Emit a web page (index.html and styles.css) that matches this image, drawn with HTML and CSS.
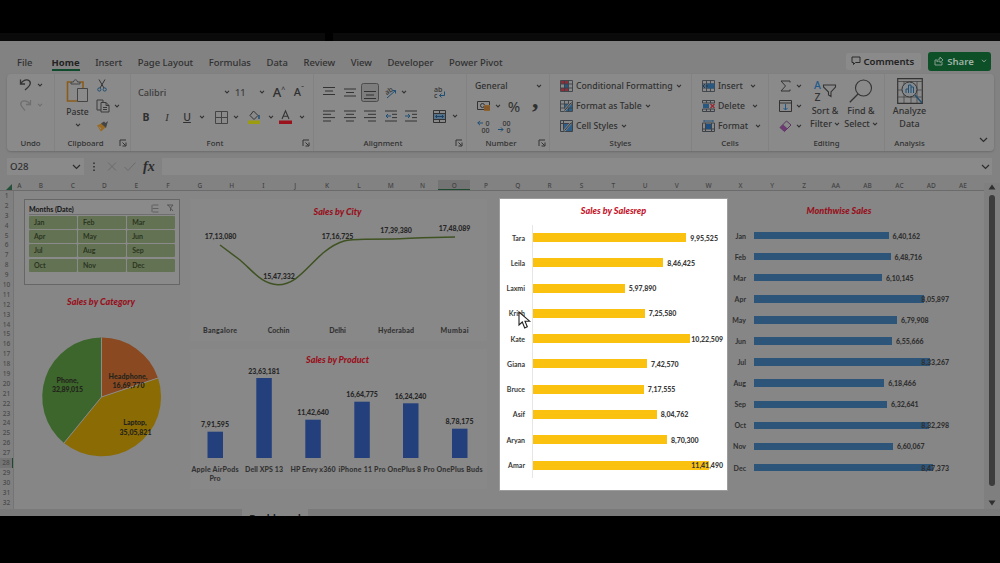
FILE: index.html
```html
<html lang="en">
<head>
    <meta charset="UTF-8">
    <meta name="viewport" content="width=device-width, initial-scale=1.0">
    <title>Sales Dashboard</title>
    <link rel="stylesheet" href="styles.css">
</head>
<body>
    <svg width="0" height="0" class="defs">
        <symbol id="chev" viewBox="0 0 6 4"><path d="M1 .8 3 2.9 5 .8" fill="none" stroke="#333" stroke-width="1.1"/></symbol>
        <symbol id="launch" viewBox="0 0 8 8"><path d="M1 7V1h6M3.5 3.5 6.5 6.5M7 3.5V7H3.5" fill="none" stroke="#333"/></symbol>
        <symbol id="grid" viewBox="0 0 13 12"><path d="M.5.5h12v11H.5zM.5 4h12M.5 8h12M4.5.5v11M8.5.5v11" fill="none" stroke="#3c4248" stroke-width=".9"/></symbol>
    </svg>
    <div class="letterbox"><span></span><span></span></div>
    <div class="app">
        <div class="tabs">
            <span class="tab file">File</span>
            <span class="tab active">Home</span>
            <span class="tab">Insert</span>
            <span class="tab">Page Layout</span>
            <span class="tab">Formulas</span>
            <span class="tab">Data</span>
            <span class="tab">Review</span>
            <span class="tab">View</span>
            <span class="tab">Developer</span>
            <span class="tab">Power Pivot</span>
            <div class="comments">
                <svg width="10" height="10" viewBox="0 0 10 10"><path d="M1 1h8v5.500H4.500L2.500 8.500v-2H1z" fill="none" stroke="#2a2a2a"/></svg>
                Comments
            </div>
            <div class="share">
                <svg width="10" height="10" viewBox="0 0 10 10"><path d="M3 4H1v5h7V6M3 6c0-2 1-3 3-3V1l3 3-3 2.500V5C5 5 4 5 3 6z" fill="none" stroke="#8fa598" stroke-width=".9"/></svg>
                <b>Share</b>
                <svg width="6" height="4" viewBox="0 0 6 4"><path d="M1 .8 3 2.900 5 .8" fill="none" stroke="#8fa598"/></svg>
            </div>
        </div>

        <div class="ribbon">
            <div class="group undo">
                <div class="tools">
                    <div class="row">
                        <svg width="13" height="14" viewBox="0 0 13 14"><path d="M1.500 1.500v4.500H6M1.500 6C4 2 8 .8 10.500 3c2.500 3-1 6-4.500 9" fill="none" stroke="#333" stroke-width="1.300"/></svg>
                        <svg class="chev"><use href="#chev"/></svg>
                    </div>
                    <div class="row faded">
                        <svg width="13" height="13" viewBox="0 0 13 13"><path d="M11.500 1v4.500H7M11.500 5.500C9 2 5 1 2.500 3 0 6 3.500 8 6 11.500" fill="none" stroke="#333" stroke-width="1.300"/></svg>
                        <svg class="chev"><use href="#chev"/></svg>
                    </div>
                </div>
                <div class="group-name"><span>Undo</span></div>
            </div>
            <div class="group clipboard">
                <div class="tools">
                    <div class="big">
                        <svg width="23" height="24" viewBox="0 0 23 24"><path d="M5 3H1.500v19H11M14 3h3v6" fill="none" stroke="#8a5c18" stroke-width="1.600"/><path d="M5 5V3h2.500c.5-3 3.500-3 4 0H14v2zM11.500 9.500h10v13h-10z" fill="#8b8b8b" stroke="#444"/></svg>
                        <span>Paste</span>
                        <svg class="chev"><use href="#chev"/></svg>
                    </div>
                    <div class="clips">
                        <svg width="10" height="13" viewBox="0 0 10 13"><path d="M2 .5 7 9M8 .5 3 9" fill="none" stroke="#333"/><circle cx="2.300" cy="10.500" r="1.600" fill="none" stroke="#1f4e74"/><circle cx="7.700" cy="10.500" r="1.600" fill="none" stroke="#1f4e74"/></svg>
                        <div class="copy">
                            <svg width="14" height="14" viewBox="0 0 14 14"><path d="M5 11H1V1h6v2M5 3.500h5l3 3V13H5zM10 3.500v3h3M7 8.500h4M7 10.500h4" fill="none" stroke="#3a3a3a"/></svg>
                            <svg class="chev"><use href="#chev"/></svg>
                        </div>
                        <svg width="13" height="12" viewBox="0 0 13 12"><path d="M1 5.500 5 11.500 9.500 7.500 5.500 3.500z" fill="#9a6a20"/><path d="M5 3.500 10 8 12 1 9.500 3 8 1.500z" fill="#444"/><path d="M3 6.500 5 9" stroke="#8b8b8b"/></svg>
                    </div>
                </div>
                <div class="group-name"><span>Clipboard</span><svg class="launch"><use href="#launch"/></svg></div>
            </div>
            <div class="group font">
                <div class="tools">
                    <div class="font-top">
                        <span class="field">Calibri</span><svg class="chev"><use href="#chev"/></svg>
                        <span class="field size">11</span><svg class="chev"><use href="#chev"/></svg>
                        <span class="grow">A<sup>^</sup></span>
                        <span class="grow shrink">A<sup>ˇ</sup></span>
                    </div>
                    <div class="font-bottom">
                        <b>B</b><i>I</i><u>U</u><svg class="chev"><use href="#chev"/></svg>
                        <svg width="13" height="13" viewBox="0 0 13 13"><path d="M.5.500h12v12H.5zM6.500.5v12M.5 6.500h12" fill="none" stroke="#444"/></svg><svg class="chev"><use href="#chev"/></svg>
                        <svg width="13" height="14" viewBox="0 0 13 14"><path d="M5.500 1 10 5.500 6 9.500 2 5.500z" fill="none" stroke="#333"/><path d="M11 5v4" stroke="#1f4e74" stroke-width="1.500"/><path d="M0 10.500h12v3.500H0z" fill="#9c9c10"/></svg><svg class="chev"><use href="#chev"/></svg>
                        <svg width="13" height="14" viewBox="0 0 13 14"><path d="M3 9 6.500.8 10 9M4.200 6.300h4.600" fill="none" stroke="#333" stroke-width="1.100"/><path d="M0 10.500h13v3.500H0z" fill="#99121c"/></svg><svg class="chev"><use href="#chev"/></svg>
                    </div>
                </div>
                <div class="group-name"><span>Font</span><svg class="launch"><use href="#launch"/></svg></div>
            </div>
            <div class="group align">
                <div class="tools">
                    <svg width="12" height="12" viewBox="0 0 12 12"><path d="M0 1.500h12M2 5h8M0 8.500h12" stroke="#333"/></svg>
                    <svg width="12" height="12" viewBox="0 0 12 12"><path d="M0 3h12M2 6.500h8M0 10h12" stroke="#333"/></svg>
                    <svg width="18" height="19" viewBox="0 0 18 19"><rect x=".5" y=".5" width="17" height="18" rx="2" fill="#7d7d7d" stroke="#4c4c4c"/><path d="M3 8.500h12M5 12h8M3 15.500h12" stroke="#333"/></svg>
                    <svg width="15" height="14" viewBox="0 0 15 14"><text x="2" y="9" font-size="7" fill="#333" transform="rotate(-35 5 7)">ab</text><path d="M4 13 12.500 5.500M9.500 5.500h3v3" fill="none" stroke="#1f4e74"/></svg>
                    <svg class="chev left"><use href="#chev"/></svg>
                    <i></i>
                    <svg width="13" height="15" viewBox="0 0 13 15"><text x="1" y="6.500" font-size="7" fill="#333">ab</text><text x="1" y="13" font-size="7" fill="#333">c</text><path d="M11.500 6.500v4H6.500M8.500 8.500l-2 2 2 2" fill="none" stroke="#1f4e74"/></svg>
                    <i></i>
                    <svg width="12" height="12" viewBox="0 0 12 12"><path d="M0 1h12M0 4.300h8M0 7.600h12M0 11h8" stroke="#333"/></svg>
                    <svg width="12" height="12" viewBox="0 0 12 12"><path d="M0 1h12M2 4.300h8M0 7.600h12M2 11h8" stroke="#333"/></svg>
                    <svg width="12" height="12" viewBox="0 0 12 12"><path d="M0 1h12M4 4.300h8M0 7.600h12M4 11h8" stroke="#333"/></svg>
                    <svg width="12" height="12" viewBox="0 0 12 12"><path d="M0 1h12M7 4.300h5M7 7.600h5M0 11h12" stroke="#333"/><path d="M6 6H1M3 4 1 6l2 2" fill="none" stroke="#1f4e74"/></svg>
                    <svg width="12" height="12" viewBox="0 0 12 12"><path d="M0 1h12M7 4.300h5M7 7.600h5M0 11h12" stroke="#333"/><path d="M0 6h5M3 4l2 2-2 2" fill="none" stroke="#1f4e74"/></svg>
                    <i></i>
                    <svg width="13" height="13" viewBox="0 0 13 13"><path d="M.5.500h12v12H.5zM.5 3.500h12M.5 9.500h12M6.500.5v3M6.500 9.500v3" fill="none" stroke="#333"/><path d="M1 4h11v5H1z" fill="#55728a"/><path d="M2.500 6.500h8M4 5 2.500 6.500 4 8M9 5l1.500 1.500L9 8" fill="none" stroke="#173d60" stroke-width=".9"/></svg>
                    <svg class="chev"><use href="#chev"/></svg>
                </div>
                <div class="group-name"><span>Alignment</span><svg class="launch"><use href="#launch"/></svg></div>
            </div>
            <div class="group number">
                <div class="tools">
                    <div class="row general"><span>General</span><svg class="chev"><use href="#chev"/></svg></div>
                    <div class="row money">
                        <svg width="14" height="11" viewBox="0 0 14 11"><path d="M.5.500h12v8H.5z" fill="none" stroke="#333"/><circle cx="5.500" cy="4.500" r="2" fill="none" stroke="#333"/><path d="M7 4h6v6H7z" fill="#8d6232"/><path d="M7 6h6M7 8h6" stroke="#6b4210" stroke-width=".6"/></svg>
                        <svg class="chev"><use href="#chev"/></svg>
                        <span class="percent">%</span>
                        <span class="comma">,</span>
                    </div>
                    <div class="row decimals">
                        <svg width="13" height="15" viewBox="0 0 13 15"><path d="M6 4H.8M3 1.800.8 4 3 6.200" fill="none" stroke="#1f4e74"/><text x="8.500" y="6.500" font-size="7" fill="#333">0</text><text x="4.500" y="13.500" font-size="7" fill="#333">00</text></svg>
                        <svg width="13" height="15" viewBox="0 0 13 15"><text x="4.500" y="6.500" font-size="7" fill="#333">00</text><path d="M0 10.500h5M3 8.500l2 2-2 2" fill="none" stroke="#1f4e74"/><text x="8.500" y="13.500" font-size="7" fill="#333">0</text></svg>
                    </div>
                </div>
                <div class="group-name"><span>Number</span><svg class="launch"><use href="#launch"/></svg></div>
            </div>
            <div class="group styles">
                <div class="tools">
                    <div class="row">
                        <svg width="13" height="12" viewBox="0 0 13 12"><path d="M1 1h7v3H1zM1 8h8v3H1z" fill="#8d2f38"/><path d="M4 4h4v4H4z" fill="#2f567c"/><use href="#grid"/></svg>
                        <span>Conditional Formatting</span><svg class="chev"><use href="#chev"/></svg>
                    </div>
                    <div class="row">
                        <svg width="13" height="12" viewBox="0 0 13 12"><path d="M5 4h7v7H5z" fill="#2c6289"/><use href="#grid"/><path d="M4 11 11 3" stroke="#8b8b8b" stroke-width="2"/><path d="M4.500 10.500 11.500 2.500" stroke="#333"/></svg>
                        <span>Format as Table</span><svg class="chev"><use href="#chev"/></svg>
                    </div>
                    <div class="row">
                        <svg width="13" height="12" viewBox="0 0 13 12"><path d="M.5.500h12v11H.5zM.5 3.500h12M3.500.5v11" fill="none" stroke="#3c4248"/><path d="M4 4h8v7H4z" fill="#2f5f88"/><path d="M4 11 11 3" stroke="#8b8b8b" stroke-width="2"/><path d="M4.500 10.500 11.500 2.500" stroke="#333"/></svg>
                        <span>Cell Styles</span><svg class="chev"><use href="#chev"/></svg>
                    </div>
                </div>
                <div class="group-name"><span>Styles</span></div>
            </div>
            <div class="group cells">
                <div class="tools">
                    <div class="row">
                        <svg width="13" height="12" viewBox="0 0 13 12"><use href="#grid"/><path d="M5 3.500h7.500v5H5z" fill="#28577f"/><path d="M6 6H1M3 4 1 6l2 2" fill="none" stroke="#173d60"/></svg>
                        <span>Insert</span><svg class="chev"><use href="#chev"/></svg>
                    </div>
                    <div class="row">
                        <svg width="13" height="12" viewBox="0 0 13 12"><path d="M.5 3V.500h12V3M.5 9v2.500h12V9M4.500.5V3M8.500.5V3M4.500 9v2.500M8.500 9v2.500M.5 3h12M.5 9h12" fill="none" stroke="#3c4248"/><path d="M1 4h6v4H1z" fill="#28577f"/><path d="M8.500 4l4 4M12.500 4l-4 4" stroke="#9a2430" stroke-width="1.200"/></svg>
                        <span>Delete</span><svg class="chev"><use href="#chev"/></svg>
                    </div>
                    <div class="row">
                        <svg width="13" height="12" viewBox="0 0 13 12"><path d="M2 1h9M2 0v2M11 0v2" stroke="#28577f"/><path d="M.5 3h12v8.500H.5zM.5 9h12M3.500 3v8.500M9.500 3v8.500" fill="none" stroke="#3c4248"/><path d="M4 4h5v5H4z" fill="#1d4f80"/></svg>
                        <span>Format</span><svg class="chev"><use href="#chev"/></svg>
                    </div>
                </div>
                <div class="group-name"><span>Cells</span></div>
            </div>
            <div class="group editing">
                <div class="tools">
                    <div class="edits">
                        <div class="row">
                            <svg width="13" height="12" viewBox="0 0 13 12"><path d="M11 2.500V1H2l4.500 5L2 11h9V9.500" fill="none" stroke="#333"/></svg>
                            <svg class="chev"><use href="#chev"/></svg>
                        </div>
                        <div class="row">
                            <svg width="13" height="12" viewBox="0 0 13 12"><path d="M.5.500h12v11H.5zM.5 3h12" fill="none" stroke="#333"/><path d="M6.500 4v6M4.500 8l2 2 2-2" fill="none" stroke="#1f5a8c"/></svg>
                            <svg class="chev"><use href="#chev"/></svg>
                        </div>
                        <div class="row">
                            <svg width="13" height="12" viewBox="0 0 13 12"><path d="M1 7.500 7.500 1 12 5 5.500 11.500z" fill="none" stroke="#5a3360"/><path d="M1 7.500 4 4.500 8.500 8.500 5.500 11.500z" fill="#6a3a70"/></svg>
                            <svg class="chev"><use href="#chev"/></svg>
                        </div>
                    </div>
                    <div class="big">
                        <svg width="24" height="24" viewBox="0 0 24 24"><text x="1" y="10" font-size="10.500" fill="#1f5a8c">A</text><text x="1.500" y="22" font-size="10.500" fill="#333">Z</text><path d="M10.500 6h12v2L18 13v4.500l-2.500-1.500V13l-5-5z" fill="none" stroke="#333" stroke-width="1.100"/></svg>
                        <span>Sort &amp;</span>
                        <span>Filter <svg class="chev"><use href="#chev"/></svg></span>
                    </div>
                    <div class="big">
                        <svg width="24" height="24" viewBox="0 0 24 24"><circle cx="14.500" cy="9" r="8" fill="none" stroke="#333" stroke-width="1.100"/><path d="M9 15 .8 23.200" stroke="#333" stroke-width="1.300"/></svg>
                        <span>Find &amp;</span>
                        <span>Select <svg class="chev"><use href="#chev"/></svg></span>
                    </div>
                </div>
                <div class="group-name"><span>Editing</span></div>
            </div>
            <div class="group analysis">
                <div class="tools">
                    <div class="big">
                        <svg width="26" height="26" viewBox="0 0 26 26"><path d="M.7.700h24.600v24.600H.7z" fill="none" stroke="#333" stroke-width="1.200"/><path d="M.7 3.500h24.600M.7 12h24M.7 19h24M7 3v22M14 3v22M20 3v22" stroke="#444" stroke-width=".8"/><circle cx="12.500" cy="11.500" r="7.500" fill="#858a8e" stroke="#333"/><path d="M9 15v-4h2.500v4M11.500 15V7H14v8M14 9h2.500v6" fill="none" stroke="#1f4e74"/><path d="M18 17 25 25" stroke="#24506f" stroke-width="1.500"/></svg>
                        <span>Analyze</span>
                        <span>Data</span>
                    </div>
                </div>
                <div class="group-name"><span>Analysis</span></div>
            </div>
            <svg class="collapse" width="9" height="6" viewBox="0 0 9 6"><path d="M1 1 4.500 4.500 8 1" fill="none" stroke="#2c2c2c" stroke-width="1.200"/></svg>
        </div>

        <div class="formula-bar">
            <div class="name-box">O28<svg width="9" height="6" viewBox="0 0 9 6"><path d="M1 1 4.500 4.500 8 1" fill="none" stroke="#2c2c2c" stroke-width="1.200"/></svg></div>
            <svg class="fx-tools" width="76" height="17" viewBox="0 0 76 17"><path d="M8 4.500v1.500M8 8v1.500M8 11.500v1.500" stroke="#2c2c2c" stroke-width="1.500"/><path d="M22 4.500 30 12.500M30 4.500 22 12.500" stroke="#6b6b6b"/><path d="M38.500 9 42 12.500 49.500 4.500" fill="none" stroke="#6b6b6b"/><text x="57" y="12.500" class="fx">fx</text></svg>
            <div class="formula"><svg width="9" height="6" viewBox="0 0 9 6"><path d="M1 1 4.500 4.500 8 1" fill="none" stroke="#2c2c2c" stroke-width="1.200"/></svg></div>
        </div>

        <div class="column-heads">
            <svg width="14" height="12" viewBox="0 0 14 12"><path d="M12 4v6H6z" fill="#24503a"/></svg>
            <span class="col-a">A</span><span>B</span><span>C</span><span>D</span><span>E</span><span>F</span><span>G</span><span>H</span><span>I</span><span>J</span><span>K</span><span>L</span><span>M</span><span>N</span><span class="current">O</span><span>P</span><span>Q</span><span>R</span><span>S</span><span>T</span><span>U</span><span>V</span><span>W</span><span>X</span><span>Y</span><span>Z</span><span>AA</span><span>AB</span><span>AC</span><span>AD</span><span>AE</span>
        </div>

        <div class="sheet">
            <div class="row-heads">
                <span>1</span><span>2</span><span>3</span><span>4</span><span>5</span><span>6</span><span>7</span><span>8</span><span>9</span><span>10</span><span>11</span><span>12</span><span>13</span><span>14</span><span>15</span><span>16</span><span>17</span><span>18</span><span>19</span><span>20</span><span>21</span><span>22</span><span>23</span><span>24</span><span>25</span><span>26</span><span>27</span><span class="current">28</span><span>29</span><span>30</span><span>31</span><span>32</span>
            </div>
            <div class="left-column">
                <div class="slicer">
                    <div class="slicer-head">
                        <span>Months (Date)</span>
                        <svg width="24" height="9" viewBox="0 0 24 9"><path d="M1.500 1h6M1.500 4.500h6M1.500 8h6M1 1v7" stroke="#606060" fill="none"/><path d="M16 1h6l-2.500 3v3M17 1l5 6" stroke="#555" fill="none"/></svg>
                    </div>
                    <div class="slicer-items">
                        <span>Jan</span><span>Feb</span><span>Mar</span>
                        <span>Apr</span><span>May</span><span>Jun</span>
                        <span>Jul</span><span>Aug</span><span>Sep</span>
                        <span>Oct</span><span>Nov</span><span>Dec</span>
                    </div>
                </div>
                <svg class="chart" width="174" height="190" viewBox="14 285 174 190">
                    <text x="101" y="305" class="title" textLength="68">Sales by Category</text>
                    <path d="M101.500 397V337.500A59.500 59.500 0 0 1 158 378z" fill="#8a4920"/>
                    <path d="M101.500 397 158 378A59.500 59.500 0 0 1 64 443z" fill="#8b6b04"/>
                    <path d="M101.500 397 64 443A59.500 59.500 0 0 1 101.500 337.500z" fill="#3c662b"/>
                    <path d="M101.500 337.500V397L158 378M101.500 397 64 443" fill="none" stroke="#8b8b8b"/>
                    <g class="pie-label">
                        <text x="67.500" y="382.500">Phone,</text><text x="67.500" y="391.500" textLength="31">32,89,015</text>
                        <text x="128" y="379" textLength="39">Headphone,</text><text x="128.500" y="388" textLength="32">16,69,770</text>
                        <text x="135" y="425">Laptop,</text><text x="135.500" y="434.500" textLength="32">35,05,821</text>
                    </g>
                </svg>
            </div>
            <div class="middle-column">
                <svg class="chart" width="302" height="148" viewBox="188 195 302 148">
                    <rect x="190" y="199" width="297" height="142" fill="#888"/>
                    <text x="337.500" y="214.500" class="title" textLength="48">Sales by City</text>
                    <path d="M220 245 240 260C252 270 262 284.700 278 284.700 296 284.700 306 268 323 253 340 239.500 348 239.300 365 239.300L393 239C410 238.500 425 237.300 455 237" fill="none" stroke="#3f5222" stroke-width="1.500"/>
                    <g class="label">
                        <text x="220.500" y="239">17,13,080</text>
                        <text x="279" y="278.500">15,47,332</text>
                        <text x="337.500" y="238.500">17,16,725</text>
                        <text x="396" y="232.500">17,39,380</text>
                        <text x="454.500" y="230.500">17,48,089</text>
                    </g>
                    <g class="label axis">
                        <text x="220" y="333" textLength="34">Bangalore</text>
                        <text x="278.500" y="333">Cochin</text>
                        <text x="337.500" y="333">Delhi</text>
                        <text x="396" y="333" textLength="36">Hyderabad</text>
                        <text x="454.500" y="333" textLength="28">Mumbai</text>
                    </g>
                </svg>
                <svg class="chart" width="302" height="148" viewBox="188 343 302 148">
                    <rect x="190" y="349" width="297" height="140" fill="#888"/>
                    <text x="337.500" y="363" class="title" textLength="63">Sales by Product</text>
                    <g fill="#23407c">
                        <rect x="207.500" y="431.700" width="15.500" height="26.300"/>
                        <rect x="256.300" y="378" width="15.500" height="80"/>
                        <rect x="305.300" y="419.700" width="15.500" height="38.300"/>
                        <rect x="354.300" y="401.700" width="15.500" height="56.300"/>
                        <rect x="403" y="403.300" width="15.500" height="54.700"/>
                        <rect x="452" y="428.700" width="15.500" height="29.300"/>
                    </g>
                    <g class="label">
                        <text x="215" y="427" textLength="28">7,91,595</text>
                        <text x="264" y="373.500">23,63,181</text>
                        <text x="313" y="415">11,42,640</text>
                        <text x="362" y="397">16,64,775</text>
                        <text x="410.500" y="398.500">16,24,240</text>
                        <text x="459.500" y="424" textLength="28">8,78,175</text>
                    </g>
                    <g class="label axis">
                        <text x="215" y="471.500" textLength="47">Apple AirPods</text>
                        <text x="215" y="481">Pro</text>
                        <text x="264" y="471.500" textLength="38">Dell XPS 13</text>
                        <text x="313" y="471.500" textLength="45">HP Envy x360</text>
                        <text x="362" y="471.500" textLength="47">iPhone 11 Pro</text>
                        <text x="411" y="471.500" textLength="47">OnePlus 8 Pro</text>
                        <text x="459.500" y="471.500" textLength="46">OnePlus Buds</text>
                    </g>
                </svg>
            </div>
            <div class="bar-chart salesrep">
                <div class="bar-title">Sales by Salesrep</div>
                <div class="bars">
                    <div class="bar-row"><span>Tara</span><i style="width: 153.3px"></i><b>9,95,525</b></div>
                    <div class="bar-row"><span>Leila</span><i style="width: 130.3px"></i><b>8,46,425</b></div>
                    <div class="bar-row"><span>Laxmi</span><i style="width: 91.7px"></i><b>5,97,890</b></div>
                    <div class="bar-row"><span>Krish</span><i style="width: 111.7px"></i><b>7,25,580</b></div>
                    <div class="bar-row"><span>Kate</span><i style="width: 157.3px"></i><b class="edge">10,22,509</b></div>
                    <div class="bar-row"><span>Giana</span><i style="width: 114px"></i><b>7,42,570</b></div>
                    <div class="bar-row"><span>Bruce</span><i style="width: 110.7px"></i><b>7,17,555</b></div>
                    <div class="bar-row"><span>Asif</span><i style="width: 123.7px"></i><b>8,04,762</b></div>
                    <div class="bar-row"><span>Aryan</span><i style="width: 134px"></i><b>8,70,300</b></div>
                    <div class="bar-row"><span>Amar</span><i style="width: 175.7px"></i><b class="edge">11,41,490</b></div>
                </div>
                <svg class="pointer" width="13" height="19" viewBox="0 0 13 19"><path d="M1 1v13l3.300-3 2.400 6 2.600-1.200L7 10.200h4.600z" fill="#fff" stroke="#222" stroke-width="1.100"/></svg>
            </div>
            <div class="bar-chart monthwise">
                <div class="bar-title">Monthwise Sales</div>
                <div class="bars">
                    <div class="bar-row"><span>Jan</span><i style="width: 134.5px"></i><b>6,40,162</b></div>
                    <div class="bar-row"><span>Feb</span><i style="width: 136.5px"></i><b>6,48,716</b></div>
                    <div class="bar-row"><span>Mar</span><i style="width: 128px"></i><b>6,10,145</b></div>
                    <div class="bar-row"><span>Apr</span><i style="width: 170px"></i><b class="edge">8,05,897</b></div>
                    <div class="bar-row"><span>May</span><i style="width: 143px"></i><b>6,79,908</b></div>
                    <div class="bar-row"><span>Jun</span><i style="width: 138px"></i><b>6,55,666</b></div>
                    <div class="bar-row"><span>Jul</span><i style="width: 175.5px"></i><b class="edge">8,33,267</b></div>
                    <div class="bar-row"><span>Aug</span><i style="width: 130.3px"></i><b>6,18,466</b></div>
                    <div class="bar-row"><span>Sep</span><i style="width: 133px"></i><b>6,32,641</b></div>
                    <div class="bar-row"><span>Oct</span><i style="width: 175.3px"></i><b class="edge">8,32,298</b></div>
                    <div class="bar-row"><span>Nov</span><i style="width: 139px"></i><b>6,60,067</b></div>
                    <div class="bar-row"><span>Dec</span><i style="width: 178.5px"></i><b class="edge">8,47,373</b></div>
                </div>
            </div>
            <div class="scrollbar">
                <svg width="8" height="6" viewBox="0 0 8 6"><path d="M4 .5 7.500 5.500H.5z" fill="#303030"/></svg>
                <div class="thumb"></div>
                <svg width="8" height="6" viewBox="0 0 8 6"><path d="M4 5.500 7.500.5H.5z" fill="#303030"/></svg>
            </div>
        </div>
        <div class="sheet-tabs"><span>Dashboard</span></div>
    </div>
</body>
</html>
```
FILE: styles.css
```css
* {
    box-sizing: border-box;
}

body {
    margin: 0;
    height: 563px;
    background-color: #000;
    overflow: hidden;
    font-family: "Noto Sans", "Open Sans", sans-serif;
    font-weight: 500;
    color: #303030;
}

svg {
    display: block;
    flex: none;
    overflow: visible;
}

.defs {
    position: absolute;
}

.letterbox {
    height: 41px;
    padding-top: 33px;
    display: flex;
    justify-content: space-between;
}

.letterbox span {
    width: 325px;
    background-color: #0a0a0a;
}

.letterbox span + span {
    width: 667px;
}

.app {
    height: 475px;
    background-color: #828282;
    display: flex;
    flex-direction: column;
    overflow: hidden;
}

/* tabs */
.tabs {
    height: 33px;
    flex: none;
    display: flex;
    align-items: center;
    gap: 15.6px;
    padding: 9px 9px 0 17px;
    font-size: 9.6px;
}

.tab {
    height: 18px;
    line-height: 19px;
    font-size: 9.45px;
    white-space: nowrap;
}

.tab.file {
    margin-right: 3.5px;
}

.tab.active {
    font-weight: bold;
    color: #222;
    border-bottom: 2px solid #0f4a2c;
}

.comments {
    margin-left: auto;
    width: 75px;
    height: 17px;
    margin-bottom: 2px;
    border-radius: 2px;
    background-color: #8a8a8a;
    font-weight: 600;
    color: #222;
    display: flex;
    align-items: center;
    gap: 2px;
    padding-left: 5px;
}

.share {
    width: 63px;
    height: 19px;
    margin-left: -9px;
    margin-bottom: 2px;
    border-radius: 3px;
    background-color: #0d5028;
    color: #9fb3a6;
    display: flex;
    align-items: center;
    justify-content: space-between;
    padding: 0 4px 0 6px;
}

.share b {
    font-weight: 600;
    margin-right: 4px;
}

/* ribbon */
.ribbon {
    height: 77px;
    flex: none;
    margin: 0 6px 0 7px;
    border-radius: 4px;
    background-color: #8a8a8a;
    box-shadow: 0 1px 2px #6c6c6c;
    display: flex;
    font-size: 8.7px;
}

.group {
    display: flex;
    flex-direction: column;
    border-right: 1px solid #828282;
}

.tools {
    height: 62px;
    display: flex;
}

.group-name {
    height: 14px;
    display: flex;
    align-items: center;
    font-size: 7.8px;
}

.group-name span {
    flex: 1;
    text-align: center;
}

.launch {
    width: 8px;
    height: 8px;
    margin-right: 3px;
    margin-left: 3px;
}

.chev {
    width: 6px;
    height: 4px;
}

.row {
    height: 20px;
    display: flex;
    align-items: center;
    white-space: nowrap;
}

.big {
    display: flex;
    flex-direction: column;
    align-items: center;
    line-height: 12.5px;
    font-size: 9px;
}

.big span {
    display: flex;
    align-items: center;
    gap: 2px;
    white-space: nowrap;
}

.undo {
    width: 48px;
}

.undo .tools {
    flex-direction: column;
    padding: 1px 0 0 12px;
}

.undo .row {
    gap: 5px;
}

.faded {
    opacity: 0.3;
}

.clipboard {
    width: 76px;
}

.clipboard .big {
    width: 44px;
    padding: 5px 0 0 1px;
}

.clipboard .big span {
    margin: 3px 0 4px;
    font-size: 8.6px;
}

.clips {
    display: flex;
    flex-direction: column;
    gap: 7px;
    padding-top: 5px;
    margin-left: -3px;
}

.clips > svg:first-child {
    margin-left: 1px;
}

.copy {
    display: flex;
    align-items: center;
    gap: 4px;
}

.font {
    width: 183px;
}

.font .tools {
    flex-direction: column;
    padding: 8px 0 0 7px;
}

.font-top {
    display: grid;
    grid-template-columns: 86px 9px 26px 10px 20px 20px;
    align-items: center;
    height: 20px;
}

.field {
    font-size: 9.2px;
    color: #3c3c3c;
}

.field.size {
    padding-left: 2px;
}

.grow {
    font-size: 13px;
    line-height: 16px;
    text-align: center;
}

.grow sup {
    font-size: 7px;
    line-height: 0;
}

.shrink {
    font-size: 11px;
}

.font-bottom {
    display: grid;
    grid-template-columns: 16px 26px 14px 16px 22px 8px 28px 6px 22px 12px;
    align-items: center;
    justify-items: center;
    height: 28px;
    padding-top: 2px;
    font-size: 10.5px;
}

.font-bottom i {
    font-family: "Liberation Serif", serif;
}

.align {
    width: 153px;
}

.align .tools {
    display: grid;
    grid-template-columns: repeat(5, 20.5px) 6px 24px 6px;
    grid-template-rows: 20px 28px;
    align-items: center;
    justify-items: center;
    padding: 8px 0 0 5px;
}

.align .left {
    justify-self: start;
}

.number {
    width: 83px;
}

.number .tools {
    flex-direction: column;
    padding: 2px 0 0 8px;
}

.general {
    justify-content: space-between;
    padding-right: 7px;
}

.money {
    padding-left: 2px;
}

.money .chev {
    margin-left: 4px;
}

.percent {
    font-size: 15px;
    font-weight: 400;
    width: 26px;
    text-align: center;
    margin-right: 5px;
}

.comma {
    font: bold 26px/10px "Liberation Serif", serif;
    margin-top: -12px;
}

.decimals {
    padding-left: 2px;
    gap: 8px;
}

.styles {
    width: 142px;
}

.cells {
    width: 77px;
}

.styles .tools,
.cells .tools {
    flex-direction: column;
    padding: 2px 0 0 10px;
}

.styles .row,
.cells .row {
    gap: 3px;
}

.cells .chev {
    margin-left: 4px;
}

.editing {
    width: 116px;
}

.edits {
    width: 32px;
    padding: 2px 0 0 10px;
}

.editing .big {
    width: 36px;
    margin-left: 6px;
    padding-top: 5px;
}

.editing .big + .big {
    margin-left: 0;
}

.editing .big > svg,
.analysis .big > svg {
    margin-bottom: 2px;
}

.edits .row {
    gap: 4px;
}

.analysis {
    width: 49px;
    border: 0;
}

.analysis .big {
    width: 49px;
    padding-top: 4px;
}

.analysis .big > svg {
    margin-bottom: 1px;
}

.collapse {
    margin: 63px 6px 0 auto;
}

/* formula bar */
.formula-bar {
    height: 17px;
    flex: none;
    margin: 7px 8px 5px 7px;
    display: flex;
}

.name-box {
    width: 77px;
    background-color: #8a8a8a;
    font-size: 9.6px;
    display: flex;
    align-items: center;
    justify-content: space-between;
    padding: 0 3px;
}

.fx-tools {
    margin-left: 2px;
}

.fx {
    font: italic bold 14px "Liberation Serif", serif;
    fill: #2c2c2c;
}

.formula {
    flex: 1;
    background-color: #8a8a8a;
    display: flex;
    justify-content: flex-end;
    align-items: center;
    padding-right: 2px;
}

/* sheet */
.column-heads {
    height: 11px;
    flex: none;
    display: flex;
    border-bottom: 1px solid #6b6b6b;
    font-size: 6.5px;
    line-height: 12px;
    color: #444;
}

.column-heads span {
    width: 31.8px;
    flex: none;
    text-align: center;
}

.column-heads .col-a {
    width: 11px;
}

.column-heads .current {
    background-color: #747474;
    border-bottom: 1px solid #1d4a30;
}

.sheet {
    height: 318px;
    flex: none;
    display: flex;
    background-color: #868686;
}

.row-heads {
    width: 14px;
    background-color: #808080;
    border-right: 1px solid #747474;
    font-size: 6.5px;
    line-height: 9.9px;
    color: #4a4a4a;
    text-align: center;
}

.row-heads span {
    display: block;
    height: 9.9px;
}

.row-heads .current {
    background-color: #747474;
    border-right: 1px solid #1d4a30;
}

.left-column {
    width: 174px;
    padding-top: 8px;
}

.slicer {
    width: 156px;
    height: 86px;
    margin-left: 10px;
    padding: 3px 4px;
    border: 1px solid #666;
    background-color: #8a8a8a;
    font-family: Lato, sans-serif;
    font-size: 7px;
}

.slicer-head {
    height: 12px;
    display: flex;
    justify-content: space-between;
    align-items: center;
    font-weight: 900;
    color: #1c1c1c;
    border-bottom: 1px solid #6f6f6f;
}

.slicer-items {
    display: grid;
    grid-template-columns: repeat(3, 1fr);
    grid-auto-rows: 13px;
    gap: 1.2px;
    margin-top: 1px;
}

.slicer-items span {
    background-color: #647254;
    border-radius: 1px;
    line-height: 13px;
    padding-left: 5px;
    font-weight: bold;
    color: #2a3520;
}

.chart {
    font-family: Lato, sans-serif;
    font-weight: bold;
    font-size: 7px;
    text-anchor: middle;
}

.title {
    font-size: 9px;
    font-weight: 900;
    font-style: italic;
    fill: #98101c;
}

.label {
    fill: #262626;
    font-weight: 900;
}

.label.axis {
    fill: #333;
}

.pie-label {
    fill: #23231c;
    font-weight: 900;
}

.middle-column {
    width: 302px;
    padding-top: 4px;
}

.bar-chart {
    font-family: Lato, sans-serif;
    font-size: 7px;
    font-weight: bold;
    display: flex;
    flex-direction: column;
}

.bar-title {
    text-align: center;
    font-size: 9.1px;
    font-weight: 900;
    font-style: italic;
    line-height: 12px;
}

.bar-row {
    display: flex;
    align-items: center;
}

.bar-row span {
    flex: none;
    text-align: right;
    padding-right: 8px;
}

.bar-row i {
    flex: none;
}

.bar-row b {
    margin-left: 4px;
    font-weight: 900;
}

.bar-row .edge {
    margin-left: -100px;
    flex: 1;
    text-align: right;
}

.salesrep {
    position: relative;
    width: 227px;
    height: 291px;
    margin: 8px 0 0 10px;
    padding-top: 6px;
    background-color: #fff;
    box-shadow: 0 0 0 1px #9c9c9c;
    color: #3a3a3a;
}

.salesrep .bar-title {
    color: #c4162c;
}

.salesrep .bars {
    margin-top: 8px;
    padding-right: 4px;
    background: linear-gradient(#e6e6e6, #e6e6e6) 32px 0 / 1px 100% no-repeat;
}

.salesrep .bar-row {
    height: 25.27px;
}

.salesrep .bar-row span {
    width: 33px;
}

.salesrep .bar-row i {
    height: 9px;
    background-color: #fac20f;
}

.pointer {
    position: absolute;
    left: 18px;
    top: 112px;
}

.monthwise {
    width: 229px;
    margin-left: 5px;
    padding-top: 14px;
    color: #303030;
}

.monthwise .bar-title {
    color: #98101c;
    padding-right: 15px;
}

.monthwise .bars {
    margin-top: 8px;
    padding-right: 12px;
}

.monthwise .bar-row {
    height: 21.1px;
}

.monthwise .bar-row span {
    width: 22px;
}

.monthwise .bar-row i {
    height: 7.5px;
    background-color: #2d5479;
}

.scrollbar {
    width: 16px;
    margin: -8px 0 0 auto;
    padding: 1px 0 2px;
    display: flex;
    flex-direction: column;
    align-items: center;
    background-color: #7f7f7f;
}

.thumb {
    width: 6px;
    height: 291px;
    margin: 5px 0 14px;
    border-radius: 3px;
    background-color: #3c3c3c;
}

.sheet-tabs {
    flex: 1;
    padding-left: 242px;
    background-color: #7a7a7a;
    overflow: hidden;
}

.sheet-tabs span {
    display: block;
    width: 66px;
    background-color: #868686;
    color: #1f1f1f;
    font-size: 9.5px;
    font-weight: bold;
    text-align: center;
    line-height: 18px;
}
```
